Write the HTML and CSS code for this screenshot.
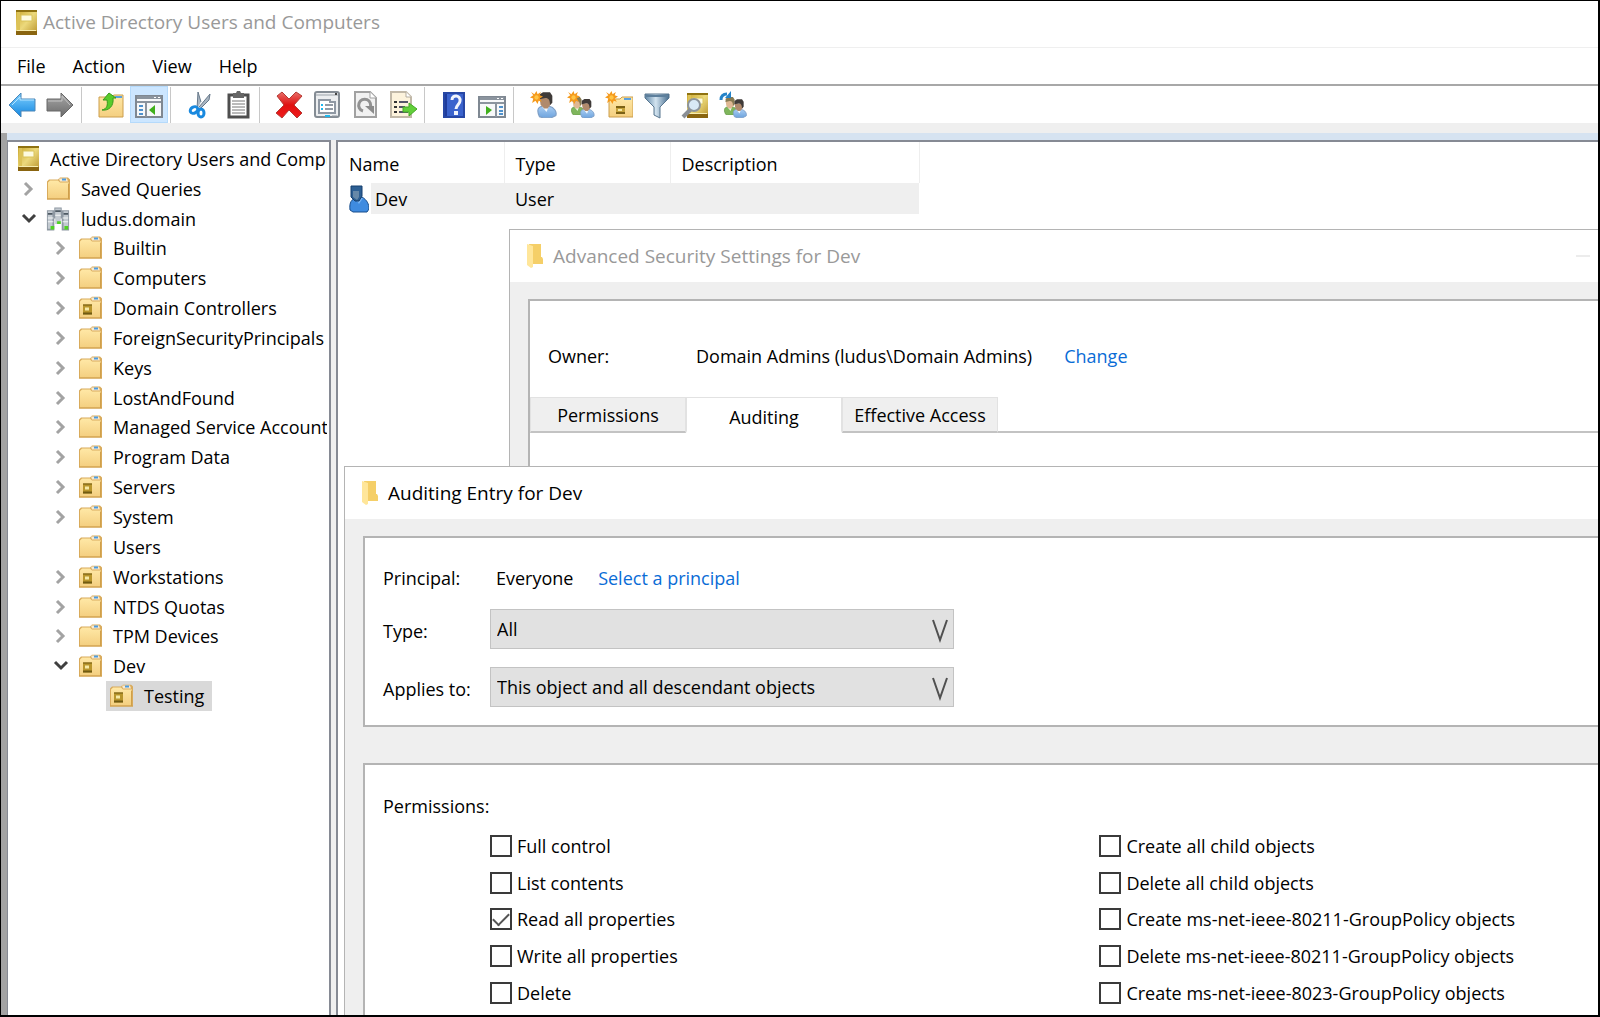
FILE: index.html
```html
<!DOCTYPE html>
<html lang="en">
<head>
  <meta charset="UTF-8">
  <meta name="viewport" content="width=device-width, initial-scale=1.0">
  <title>Active Directory Users and Computers</title>
  <link rel="stylesheet" href="styles.css">
</head>
<body>
  <!-- Shared icons -->
  <svg class="sprite" aria-hidden="true">
    <defs>
      <linearGradient id="gold" x1="0" y1="0" x2="1" y2="1">
        <stop offset="0" stop-color="#c9a52c"/><stop offset=".5" stop-color="#ecd97c"/><stop offset="1" stop-color="#b8922a"/>
      </linearGradient>
      <linearGradient id="manila" x1="0" y1="0" x2="0" y2="1">
        <stop offset="0" stop-color="#ffe8a6"/><stop offset="1" stop-color="#f4cf80"/>
      </linearGradient>
      <linearGradient id="sky" x1="0" y1="0" x2="0" y2="1">
        <stop offset="0" stop-color="#7fd0ff"/><stop offset="1" stop-color="#1286e0"/>
      </linearGradient>
      <linearGradient id="steel" x1="0" y1="0" x2="0" y2="1">
        <stop offset="0" stop-color="#a8a8a8"/><stop offset="1" stop-color="#6a6a6a"/>
      </linearGradient>
      <linearGradient id="funnel" x1="0" y1="0" x2="1" y2="0">
        <stop offset="0" stop-color="#5f86a6"/><stop offset=".45" stop-color="#d3e4f0"/><stop offset="1" stop-color="#456c8e"/>
      </linearGradient>
      <linearGradient id="red" x1="0" y1="0" x2="0" y2="1">
        <stop offset="0" stop-color="#e8706a"/><stop offset=".5" stop-color="#e01010"/><stop offset="1" stop-color="#f01c1c"/>
      </linearGradient>
      <linearGradient id="shirt" x1="0" y1="0" x2="0" y2="1">
        <stop offset="0" stop-color="#a9cdf2"/><stop offset="1" stop-color="#6ea4de"/>
      </linearGradient>
    </defs>
    <symbol id="book" viewBox="0 0 21 25">
      <rect width="21" height="25" rx="1" fill="url(#gold)"/>
      <path d="M0 0h21v2H0z" fill="#8f7211"/>
      <path d="M0 21h21v4H0z" fill="#8a6510"/>
      <path d="M1 20h19v1H1z" fill="#f7ecae"/>
      <path d="M1 2h3v18H1z" fill="#dcc257"/>
      <path d="M5 5h11v6H5z" fill="#fdfbe0" stroke="#d9c35a"/>
    </symbol>
    <symbol id="folder" viewBox="0 0 24 23">
      <path d="M1 4l2-2h9l2-2h8l2 2v20H1z" fill="#d9ab5c"/>
      <path d="M2 5l2-2h8l2 2h9v16H2z" fill="url(#manila)"/>
      <path d="M13 1h8l1 3h-8z" fill="#f8ead0"/>
      <path d="M16 1h4v2h-4z" fill="#4c9be0"/>
      <path d="M1 21h23v1H1zM22 6h1v15h-1z" fill="#cf9f4a"/>
    </symbol>
    <symbol id="ou" viewBox="0 0 24 23">
      <use href="#folder" width="24" height="23"/>
      <path d="M5 8h9v10H5z" fill="#b8952b"/>
      <path d="M5 8h9v1H5zM5 16h9v2H5z" fill="#705a12"/>
      <path d="M7 11h4v3H7z" fill="#f6e9a4"/>
    </symbol>
    <symbol id="domain" viewBox="0 0 26 25">
      <path d="M9 0h8v12H9zM1 3h8v22H1zM17 3h8v22h-8z" fill="#8e98a2"/>
      <path d="M10 1h6v17h-6zM2 4h5v19H2zM19 4h5v19h-5z" fill="#c3cad1"/>
      <path d="M10 3h6v2h-6zM2 6h5v2H2zM19 6h5v2h-5z" fill="#4d5963"/>
      <path d="M10 8h6v1h-6zM2 11h6v1H2zM18 11h6v1h-6zM2 15h6v1H2zM18 15h6v1h-6z" fill="#f5f7f8"/>
      <path d="M12 15h4v3h-4zM5 20h4v4H5zM20 20h4v4h-4z" fill="#4fd321"/>
    </symbol>
    <symbol id="window-folder" viewBox="0 0 16 24">
      <path d="M2 0h12v13h1l1 2v5H4z" fill="#f5cf68"/>
      <path d="M0 0l6 2v21l-2 1-4-3z" fill="#ffe69a"/>
    </symbol>
    <symbol id="right" viewBox="0 0 12 16"><path d="M2 2l6 6-6 6" fill="none" stroke="#a3a3a3" stroke-width="3"/></symbol>
    <symbol id="down" viewBox="0 0 16 12"><path d="M2 2l6 6 6-6" fill="none" stroke="#404040" stroke-width="3"/></symbol>
    <symbol id="burst" viewBox="0 0 12 12">
      <path d="M6 0l1 3 3-2-1 3 3 1-3 2 2 3-3-1-1 3-2-3-3 2 1-4-3-1 3-2-2-3 3 2z" fill="#f59a1c"/>
      <circle cx="6" cy="6" r="2" fill="#ffc545"/>
    </symbol>
    <symbol id="person-blue" viewBox="0 0 18 22">
      <path d="M3 21c-3-6-1-9 4-9h4c5 1 7 5 6 8l-4 2H6z" fill="url(#shirt)" stroke="#7e9fc6"/>
      <path d="M5 12l4 5 2-5z" fill="#f4f8fc"/>
      <path d="M3 5h10v5l-3 4H7l-3-3z" fill="#b08a6c"/>
      <path d="M3 6V2l3-2h6l2 3v6l-2 2c0-4-1-6-4-6z" fill="#3f3a38"/>
    </symbol>
    <symbol id="person-green" viewBox="0 0 18 22">
      <path d="M3 21c-3-6-1-9 4-9h4c5 1 7 5 6 8l-4 2H6z" fill="#7fb65c" stroke="#6a9d4c"/>
      <path d="M5 12l4 5 2-5z" fill="#eef8e6"/>
      <path d="M3 5h10v5l-3 4H7l-3-3z" fill="#dfb893"/>
      <path d="M3 6V2l3-2h6l2 3v6l-2 2c0-4-1-6-4-6z" fill="#877a52"/>
    </symbol>
  </svg>

  <div class="desktop">
    <main class="console">
      <header class="title-bar">
        <svg class="icon-book"><use href="#book"/></svg>
        <h1>Active Directory Users and Computers</h1>
      </header>

      <nav class="menu-bar">
        <button type="button">File</button>
        <button type="button">Action</button>
        <button type="button">View</button>
        <button type="button">Help</button>
      </nav>

      <div class="toolbar">
        <button type="button" aria-label="Back">
          <svg viewBox="0 0 28 28"><path d="M1 14L13 2v6h14v12H13v6z" fill="url(#sky)" stroke="#4a86b8"/><path d="M4 14l8-8v3h14" fill="none" stroke="#b4e4ff"/></svg>
        </button>
        <button type="button" aria-label="Forward">
          <svg viewBox="0 0 28 28"><path d="M27 14L15 2v6H1v12h14v6z" fill="url(#steel)" stroke="#686868"/><path d="M2 10h14V5l8 9" fill="none" stroke="#c4c4c4"/></svg>
        </button>
        <span class="separator"></span>
        <button type="button" aria-label="Up one level">
          <svg viewBox="0 0 28 28"><path d="M2 6h12l3-2h9v22H2z" fill="url(#manila)" stroke="#cc9e4d"/><path d="M18 5h7v2h-7z" fill="#5ba1df"/><path d="M5 19c5-1 6-5 5-10H6l6-7 7 5h-3c1 8-4 13-11 12z" fill="#58cc2b" stroke="#3a9a1d"/></svg>
        </button>
        <button type="button" class="active" aria-label="Show console tree">
          <svg viewBox="0 0 28 28"><path d="M1 5h26v21H1z" fill="#f7f8f9" stroke="#7f8892" stroke-width="2"/><path d="M2 5h24v3H2zM2 10h24v2H2z" fill="#8b949e"/><path d="M19 6h2v1h-2zM23 6h2v1h-2z" fill="#fff"/><path d="M10 12h2v14h-2z" fill="#8b949e"/><path d="M4 15h4M4 19h4M4 23h4" stroke="#4f91cc" stroke-width="2"/><path d="M20 14v10l-6-5z" fill="#40b01c"/></svg>
        </button>
        <span class="separator"></span>
        <button type="button" aria-label="Cut">
          <svg viewBox="0 0 28 28"><path d="M11 18L12 1l3 10M13 16L24 3l-1 6-9 9" fill="#aab6c2" stroke="#66788a"/><ellipse cx="8" cy="19" rx="3" ry="4" transform="rotate(60 8 19)" fill="#fff" stroke="#1989df" stroke-width="3"/><ellipse cx="15" cy="22" rx="3" ry="4" fill="#fff" stroke="#1989df" stroke-width="3"/></svg>
        </button>
        <button type="button" aria-label="Paste">
          <svg viewBox="0 0 28 28"><path d="M5 4h19v22H5z" fill="#fff" stroke="#4e4e4e" stroke-width="3"/><path d="M9 2h3l1-2h3l1 2h3v5H9z" fill="#666"/><path d="M8 10h13M8 13h13M8 16h13M8 19h13M8 22h13" stroke="#777"/></svg>
        </button>
        <span class="separator"></span>
        <button type="button" aria-label="Delete">
          <svg viewBox="0 0 28 28"><path d="M2 5l5-4 7 7 7-7 6 4-8 9 8 8-5 5-8-8-7 8-6-5 8-8z" fill="url(#red)" stroke="#b43a34"/></svg>
        </button>
        <button type="button" aria-label="Properties">
          <svg viewBox="0 0 28 28"><rect x="2" y="1" width="24" height="25" rx="2" fill="#eceef0" stroke="#848c94" stroke-width="2"/><path d="M3 4h22" stroke="#9ca3aa"/><path d="M22 2h2v2h-2z" fill="#444"/><path d="M6 9h11v2h5v11H6z" fill="#fff" stroke="#8f98a3" stroke-width="2"/><path d="M12 14h8M12 18h8" stroke="#929aa4" stroke-width="2"/><path d="M8 14h2M8 18h2M12 25h5" stroke="#1fb8ee" stroke-width="2"/><path d="M19 25h5" stroke="#9298a0"/></svg>
        </button>
        <button type="button" aria-label="Refresh">
          <svg viewBox="0 0 28 28"><path d="M4 1h15l6 6v19H4z" fill="#f1f1f1" stroke="#a1a1a1" stroke-width="2"/><path d="M19 1v6h6" fill="#fff" stroke="#a1a1a1"/><path d="M12 20a6 6 0 1 1 7-3" fill="none" stroke="#929292" stroke-width="3"/><path d="M14 15h9v8z" fill="#8b8b8b"/></svg>
        </button>
        <button type="button" aria-label="Export list">
          <svg viewBox="0 0 28 28"><path d="M2 1h15l5 5v20H2z" fill="#fdf3dc" stroke="#c2b9a8" stroke-width="2"/><path d="M17 1v5h5" fill="#fff" stroke="#b5ad9e"/><path d="M10 11h9M10 16h6M10 21h9" stroke="#555568" stroke-width="2"/><path d="M5 11h3M5 16h3M5 21h3" stroke="#333" stroke-width="2"/><path d="M14 16h6v-4l8 6-8 7v-4h-6z" fill="#62cf3a" stroke="#45a825"/></svg>
        </button>
        <span class="separator"></span>
        <button type="button" aria-label="Help">
          <svg viewBox="0 0 28 28"><path d="M3 1h22v26H3z" fill="#3b63cd"/><path d="M3 1h4v26H3z" fill="#1f3c9c"/><path d="M4 2h20v24H4z" fill="none" stroke="#2747a5" stroke-width="2"/><path d="M12 9c0-6 9-5 8 1 0 3-4 4-4 8" fill="none" stroke="#f1f4fc" stroke-width="3"/><path d="M14 20h4v4h-4z" fill="#f1f4fc"/></svg>
        </button>
        <button type="button" aria-label="Show action pane">
          <svg viewBox="0 0 28 28"><path d="M1 6h26v20H1z" fill="#f7f8f9" stroke="#7f8892" stroke-width="2"/><path d="M2 6h24v3H2zM2 11h24v2H2z" fill="#8b949e"/><path d="M19 7h2v1h-2zM23 7h2v1h-2z" fill="#fff"/><path d="M17 13h2v13h-2z" fill="#8b949e"/><path d="M21 16h4M21 20h4M21 23h4" stroke="#4f91cc" stroke-width="2"/><path d="M8 15v9l6-5z" fill="#40b01c"/></svg>
        </button>
        <span class="separator"></span>
        <button type="button" aria-label="Create a new user">
          <svg viewBox="0 0 28 28"><use href="#person-blue" x="7" y="1" width="21" height="26"/><use href="#burst" x="1" y="0" width="13" height="13"/></svg>
        </button>
        <button type="button" aria-label="Create a new group">
          <svg viewBox="0 0 28 28"><use href="#person-green" x="3" y="6" width="15" height="18"/><use href="#person-blue" x="12" y="8" width="16" height="19"/><use href="#burst" x="0" y="0" width="13" height="13"/></svg>
        </button>
        <button type="button" aria-label="Create a new organizational unit">
          <svg viewBox="0 0 28 28"><path d="M4 8h11l2-2h11v20H4z" fill="url(#manila)" stroke="#cc9e4d"/><path d="M19 7h7v2h-7z" fill="#5ba1df"/><path d="M11 15h9v8h-9z" fill="#c4a13a"/><path d="M11 15h9v2h-9zM11 21h9v2h-9z" fill="#7b6115"/><path d="M13 18h4v2h-4z" fill="#f6e9a4"/><use href="#burst" x="0" y="0" width="13" height="13"/></svg>
        </button>
        <button type="button" aria-label="Filter">
          <svg viewBox="0 0 28 28"><path d="M2 3h24v4L17 16v11l-6-3v-8L2 7z" fill="url(#funnel)" stroke="#58768f"/><path d="M3 4h22v2H3z" fill="#5d7f9c"/></svg>
        </button>
        <button type="button" aria-label="Find">
          <svg viewBox="0 0 28 28"><use href="#book" x="6" y="2" width="21" height="25"/><path d="M2 26l8-8" stroke="#8a8f96" stroke-width="4"/><circle cx="13" cy="14" r="6" fill="#d9e9f5" stroke="#8d949b" stroke-width="2"/></svg>
        </button>
        <button type="button" aria-label="Add to a group">
          <svg viewBox="0 0 28 28"><use href="#person-green" x="4" y="6" width="15" height="18"/><use href="#person-blue" x="13" y="8" width="15" height="19"/><path d="M2 9c0-4 2-6 6-6" fill="none" stroke="#2583c8" stroke-width="3"/><path d="M12 0v7H6z" fill="#2583c8"/></svg>
        </button>
      </div>

      <div class="panes">
        <div class="tree-pane">
          <ul class="tree">
            <li class="root"><svg class="icon-book"><use href="#book"/></svg><span>Active Directory Users and Computers</span></li>
            <li><svg class="arrow"><use href="#right"/></svg><svg class="icon"><use href="#folder"/></svg><span>Saved Queries</span></li>
            <li><svg class="arrow"><use href="#down"/></svg><svg class="icon"><use href="#domain"/></svg><span>ludus.domain</span></li>
            <li class="child"><svg class="arrow"><use href="#right"/></svg><svg class="icon"><use href="#folder"/></svg><span>Builtin</span></li>
            <li class="child"><svg class="arrow"><use href="#right"/></svg><svg class="icon"><use href="#folder"/></svg><span>Computers</span></li>
            <li class="child"><svg class="arrow"><use href="#right"/></svg><svg class="icon"><use href="#ou"/></svg><span>Domain Controllers</span></li>
            <li class="child"><svg class="arrow"><use href="#right"/></svg><svg class="icon"><use href="#folder"/></svg><span>ForeignSecurityPrincipals</span></li>
            <li class="child"><svg class="arrow"><use href="#right"/></svg><svg class="icon"><use href="#folder"/></svg><span>Keys</span></li>
            <li class="child"><svg class="arrow"><use href="#right"/></svg><svg class="icon"><use href="#folder"/></svg><span>LostAndFound</span></li>
            <li class="child"><svg class="arrow"><use href="#right"/></svg><svg class="icon"><use href="#folder"/></svg><span>Managed Service Accounts</span></li>
            <li class="child"><svg class="arrow"><use href="#right"/></svg><svg class="icon"><use href="#folder"/></svg><span>Program Data</span></li>
            <li class="child"><svg class="arrow"><use href="#right"/></svg><svg class="icon"><use href="#ou"/></svg><span>Servers</span></li>
            <li class="child"><svg class="arrow"><use href="#right"/></svg><svg class="icon"><use href="#folder"/></svg><span>System</span></li>
            <li class="child"><svg class="arrow"></svg><svg class="icon"><use href="#folder"/></svg><span>Users</span></li>
            <li class="child"><svg class="arrow"><use href="#right"/></svg><svg class="icon"><use href="#ou"/></svg><span>Workstations</span></li>
            <li class="child"><svg class="arrow"><use href="#right"/></svg><svg class="icon"><use href="#folder"/></svg><span>NTDS Quotas</span></li>
            <li class="child"><svg class="arrow"><use href="#right"/></svg><svg class="icon"><use href="#folder"/></svg><span>TPM Devices</span></li>
            <li class="child"><svg class="arrow"><use href="#down"/></svg><svg class="icon"><use href="#ou"/></svg><span>Dev</span></li>
            <li class="grandchild selected"><svg class="icon"><use href="#ou"/></svg><span>Testing</span></li>
          </ul>
        </div>

        <div class="list-pane">
          <table class="object-list">
            <thead>
              <tr><th>Name</th><th>Type</th><th class="wide">Description</th></tr>
            </thead>
            <tbody>
              <tr>
                <td class="name-cell">
                  <div class="object-name">
                    <svg class="icon-user" viewBox="0 0 20 28"><path d="M1 25c-1-8 2-11 6-12L13 12c5 3 7 7 7 12l-2 3H4z" fill="#3f8be0" stroke="#174d8c"/><path d="M6 13l4 6 4-6z" fill="#74b1f2"/><path d="M2 1h11v10l-3 5H6l-4-4z" fill="#2d5f93" stroke="#143f6e"/><path d="M4 6h6v6l-2 3-4-3z" fill="#6688a8"/></svg>
                    <span>Dev</span>
                  </div>
                </td>
                <td>User</td>
                <td></td>
              </tr>
            </tbody>
          </table>
        </div>
      </div>
    </main>

    <!-- Advanced Security Settings -->
    <section class="window security-window">
      <header class="window-title inactive">
        <svg class="icon-window"><use href="#window-folder"/></svg>
        <h2>Advanced Security Settings for Dev</h2>
        <button type="button" class="minimize" aria-label="Minimize"></button>
      </header>
      <div class="panel">
        <div class="owner-row">
          <span class="owner-label">Owner:</span>
          <span>Domain Admins (ludus\Domain Admins)</span>
          <a href="#">Change</a>
        </div>
        <div class="tabs">
          <button type="button">Permissions</button>
          <button type="button" class="current">Auditing</button>
          <button type="button">Effective Access</button>
        </div>
        <p class="hint">For additional information, double-click an audit entry. To modify an audit entry, select the entry and click Edit (if available).</p>
      </div>
    </section>

    <!-- Auditing Entry -->
    <section class="window entry-window">
      <header class="window-title">
        <svg class="icon-window"><use href="#window-folder"/></svg>
        <h2>Auditing Entry for Dev</h2>
      </header>
      <div class="panel principal-panel">
        <div class="field">
          <span class="field-label">Principal:</span>
          <span class="principal">Everyone <a href="#">Select a principal</a></span>
        </div>
        <div class="field">
          <label class="field-label" for="entryType">Type:</label>
          <div class="select-box">
            <select id="entryType"><option>All</option></select>
            <svg viewBox="0 0 16 24"><path d="M1 1l7 20 7-20" fill="none" stroke="#505050" stroke-width="2"/></svg>
          </div>
        </div>
        <div class="field">
          <label class="field-label" for="appliesTo">Applies to:</label>
          <div class="select-box">
            <select id="appliesTo"><option>This object and all descendant objects</option></select>
            <svg viewBox="0 0 16 24"><path d="M1 1l7 20 7-20" fill="none" stroke="#505050" stroke-width="2"/></svg>
          </div>
        </div>
      </div>
      <div class="panel permissions-panel">
        <h3>Permissions:</h3>
        <div class="permissions">
          <label><input type="checkbox">Full control</label>
          <label><input type="checkbox">Create all child objects</label>
          <label><input type="checkbox">List contents</label>
          <label><input type="checkbox">Delete all child objects</label>
          <label><input type="checkbox" checked>Read all properties</label>
          <label><input type="checkbox">Create ms-net-ieee-80211-GroupPolicy objects</label>
          <label><input type="checkbox">Write all properties</label>
          <label><input type="checkbox">Delete ms-net-ieee-80211-GroupPolicy objects</label>
          <label><input type="checkbox">Delete</label>
          <label><input type="checkbox">Create ms-net-ieee-8023-GroupPolicy objects</label>
        </div>
      </div>
    </section>
  </div>
</body>
</html>
```
FILE: styles.css
```css
* {
  box-sizing: border-box;
}
body {
  margin: 0;
  font-family: 'Segoe UI', 'Open Sans', sans-serif;
  font-size: 18px;
  line-height: 26px;
  color: #000;
}
h1, h2, h3, p, ul {
  margin: 0;
  padding: 0;
  font-size: inherit;
  font-weight: 400;
}
h1, h2 {
  font-size: 19px;
}
button, select {
  font: inherit;
  color: inherit;
  background: none;
  border: none;
  padding: 0;
}
a {
  color: #0a6cd6;
  text-decoration: none;
}
svg {
  display: block;
  flex: none;
}
.sprite {
  position: absolute;
  width: 0;
  height: 0;
}
.desktop {
  position: relative;
  height: 100vh;
  overflow: hidden;
  border: 1px solid #000;
  border-right-width: 2px;
  border-bottom-width: 2px;
}

/* Console window */
.console {
  display: flex;
  flex-direction: column;
  height: 100%;
  background-color: #efefef;
}
.title-bar {
  display: flex;
  align-items: center;
  gap: 6px;
  height: 47px;
  padding: 0 15px 4px;
  color: #999;
  background-color: #fff;
  border-bottom: 1px solid #efefef;
}
.icon-book {
  width: 21px;
  height: 25px;
}
.menu-bar {
  display: flex;
  gap: 27px;
  height: 38px;
  padding: 0 16px;
  background-color: #fff;
  border-bottom: 2px solid #a8a8a8;
}
.toolbar {
  display: flex;
  height: 37px;
  padding-left: 2px;
  background-color: #fff;
}
.toolbar button {
  width: 38px;
  padding: 1px 4px 0;
  border: 1px solid transparent;
}
.toolbar button.active {
  background-color: #cce6ff;
  border-color: #b5dafb;
}
.toolbar svg {
  width: 28px;
  height: 28px;
}
.separator {
  width: 1px;
  margin: 1px 10px 0 2px;
  background-color: #c8c8c8;
}
.panes {
  display: flex;
  flex: 1;
  gap: 5px;
  min-height: 0;
  margin-top: 10px;
  padding-top: 7px;
  border-left: 6px solid #a3a3a3;
  box-shadow: inset 0 7px #d6e3f1;
}

/* Console tree */
.tree-pane {
  flex: none;
  width: 324px;
  padding: 2px 2px 0 0;
  background-color: #fff;
  border: 2px solid #868a94;
  border-left-width: 1px;
  border-bottom: 0;
}
.tree {
  display: grid;
  grid-auto-rows: 1fr;
  min-height: 567px;
  list-style: none;
  overflow: hidden;
}
.tree li {
  display: flex;
  align-items: center;
  padding-left: 13px;
  white-space: nowrap;
}
.tree .root {
  padding-left: 10px;
  gap: 11px;
}
.tree .root span {
  min-width: 0;
  overflow: hidden;
}
.tree .child {
  padding-left: 45px;
}
.tree .grandchild {
  justify-self: start;
  margin-left: 98px;
  padding: 0 8px 0 3px;
}
.tree .selected {
  background-color: #d9d9d9;
}
.tree .arrow {
  width: 16px;
  height: 16px;
  margin-right: 9px;
}
.tree .icon {
  width: 24px;
  height: 24px;
  margin-right: 11px;
}

/* Object list */
.list-pane {
  flex: 1;
  background-color: #fff;
  border: 2px solid #868a94;
  border-width: 2px 0 0 2px;
}
.object-list {
  border-collapse: collapse;
  table-layout: fixed;
  width: 581px;
}
.object-list th, .object-list td {
  padding: 0 0 0 11px;
  font-weight: 400;
  text-align: left;
}
.object-list th {
  width: 166px;
  height: 41px;
  padding-top: 3px;
  border-right: 1px solid #eee;
}
.object-list th.wide {
  width: 249px;
}
.object-list td {
  height: 31px;
  background-color: #efefef;
}
.object-list .name-cell {
  background: linear-gradient(to right, #fff 33px, #efefef 33px);
}
.object-name {
  display: flex;
  align-items: center;
  gap: 6px;
}
.icon-user {
  width: 20px;
  height: 28px;
}

/* Dialog windows */
.window {
  position: absolute;
  right: 0;
  background-color: #efefef;
  border: 1px solid #b4b4b4;
  border-right: 0;
}
.security-window {
  top: 228px;
  left: 508px;
  height: 300px;
  overflow: hidden;
}
.entry-window {
  top: 465px;
  left: 343px;
  bottom: 0;
  overflow: hidden;
  border-bottom: 0;
}
.window-title {
  display: flex;
  align-items: center;
  gap: 10px;
  height: 52px;
  padding: 0 8px 0 17px;
  background-color: #fff;
}
.window-title.inactive {
  color: #999;
}
.icon-window {
  width: 16px;
  height: 24px;
}
.minimize {
  width: 14px;
  height: 2px;
  margin-left: auto;
  background-color: #ececec;
}
.panel {
  margin: 17px 0 0 18px;
  background-color: #fff;
  border: 2px solid #b4b4b4;
  border-right: 0;
}
.owner-row {
  display: flex;
  padding: 42px 18px 28px;
}
.owner-label {
  width: 148px;
}
.owner-row a {
  margin-left: 32px;
}
.tabs {
  display: flex;
  border-bottom: 2px solid #c3c3c3;
}
.tabs button {
  width: 156px;
  height: 36px;
  margin-bottom: -2px;
  background-color: #efefef;
  border: 1px solid #e2e2e2;
  border-bottom: 2px solid #c3c3c3;
}
.tabs .current {
  padding-top: 4px;
  background-color: #fff;
  border-bottom-color: #fff;
}
.hint {
  padding: 28px 18px;
  white-space: nowrap;
}

/* Auditing entry form */
.principal-panel {
  display: grid;
  gap: 18px;
  padding: 27px 18px 18px;
}
.field {
  display: flex;
  align-items: center;
}
.field-label {
  width: 107px;
}
label.field-label {
  padding-top: 4px;
}
.principal {
  padding-left: 6px;
}
.principal a {
  margin-left: 20px;
}
.select-box {
  position: relative;
  width: 464px;
}
.select-box select {
  display: block;
  width: 100%;
  height: 40px;
  padding: 0 30px 0 6px;
  appearance: none;
  background-color: #e1e1e1;
  border: 1px solid #c3c3c3;
}
.select-box svg {
  position: absolute;
  top: 10px;
  right: 6px;
  width: 16px;
  height: 24px;
  pointer-events: none;
}
.permissions-panel {
  margin-top: 36px;
  padding: 28px 0 40px 18px;
}
.permissions {
  display: grid;
  grid-template-columns: 55% 45%;
  grid-auto-rows: 1fr;
  min-height: 183px;
  margin: 9px 0 0 107px;
}
.permissions label {
  display: flex;
  align-items: center;
  gap: 5px;
}
.permissions input {
  appearance: none;
  display: grid;
  place-items: center;
  width: 22px;
  height: 22px;
  margin: 0;
  border: 2px solid #3a3a3a;
}
.permissions input:checked::before {
  content: "";
  width: 14px;
  height: 7px;
  margin-top: -4px;
  border: solid #555;
  border-width: 0 0 2px 2px;
  transform: rotate(-45deg);
}
```
